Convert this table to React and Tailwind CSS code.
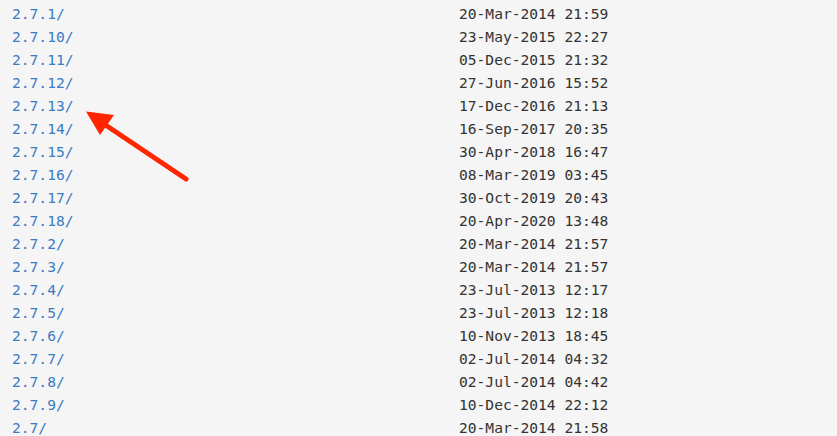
const rows = [
  ['2.7.1/', '20-Mar-2014 21:59'],
  ['2.7.10/', '23-May-2015 22:27'],
  ['2.7.11/', '05-Dec-2015 21:32'],
  ['2.7.12/', '27-Jun-2016 15:52'],
  ['2.7.13/', '17-Dec-2016 21:13'],
  ['2.7.14/', '16-Sep-2017 20:35'],
  ['2.7.15/', '30-Apr-2018 16:47'],
  ['2.7.16/', '08-Mar-2019 03:45'],
  ['2.7.17/', '30-Oct-2019 20:43'],
  ['2.7.18/', '20-Apr-2020 13:48'],
  ['2.7.2/', '20-Mar-2014 21:57'],
  ['2.7.3/', '20-Mar-2014 21:57'],
  ['2.7.4/', '23-Jul-2013 12:17'],
  ['2.7.5/', '23-Jul-2013 12:18'],
  ['2.7.6/', '10-Nov-2013 18:45'],
  ['2.7.7/', '02-Jul-2014 04:32'],
  ['2.7.8/', '02-Jul-2014 04:42'],
  ['2.7.9/', '10-Dec-2014 22:12'],
  ['2.7/', '20-Mar-2014 21:58'],
];

export default function App() {
  return (
    <div className="relative h-[436px] w-[837px] overflow-hidden bg-[#f5f5f5] pl-[12px] pt-[2px] font-['DejaVu_Sans_Mono',monospace] text-[14.6px] leading-[23px]">
      {rows.map(([name, date]) => (
        <div key={name} className="flex whitespace-pre">
          <a href="#" className="w-[447px] text-[#3a7bc4]">{name}</a>
          <span className="text-[#333]">{date}</span>
        </div>
      ))}
      <svg className="pointer-events-none absolute left-0 top-0" width="837" height="436">
        <line x1="186" y1="179" x2="104" y2="124" stroke="#ff2600" strokeWidth="5" strokeLinecap="round" />
        <polygon points="86,111.5 114,115 100,135" fill="#ff2600" />
      </svg>
    </div>
  );
}
